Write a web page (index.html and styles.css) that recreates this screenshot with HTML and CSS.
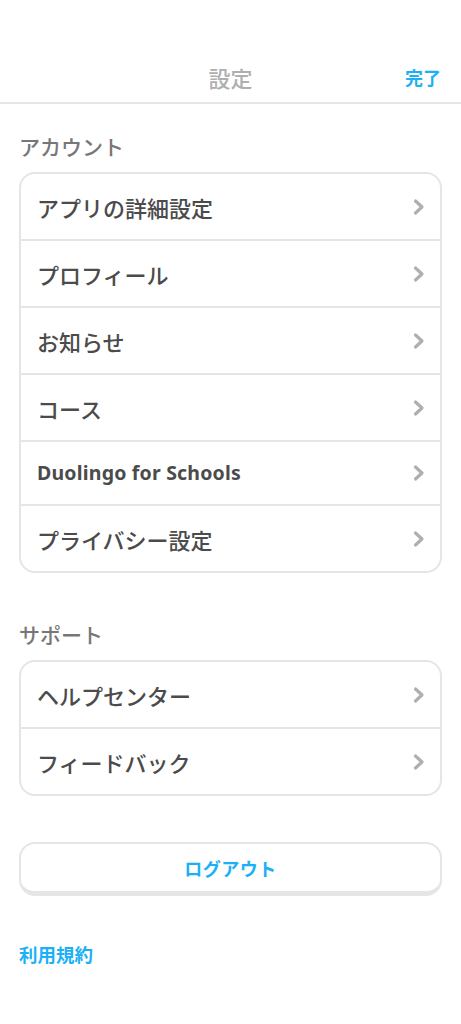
FILE: index.html
```html
<!DOCTYPE html>
<html lang="ja">
<head>
<meta charset="utf-8">
<title>設定</title>
<link rel="stylesheet" href="styles.css">
</head>
<body>
<header class="header">
  <div class="header-title">設定</div>
  <div class="header-done">完了</div>
</header>
<main class="content">
  <div class="section-label">アカウント</div>
  <div class="card">
    <div class="row"><span class="row-text">アプリの詳細設定</span><svg class="chev" viewBox="0 0 14 18"><path d="M3.5 3 L10 9 L3.5 15"/></svg></div>
    <div class="row"><span class="row-text">プロフィール</span><svg class="chev" viewBox="0 0 14 18"><path d="M3.5 3 L10 9 L3.5 15"/></svg></div>
    <div class="row"><span class="row-text">お知らせ</span><svg class="chev" viewBox="0 0 14 18"><path d="M3.5 3 L10 9 L3.5 15"/></svg></div>
    <div class="row"><span class="row-text">コース</span><svg class="chev" viewBox="0 0 14 18"><path d="M3.5 3 L10 9 L3.5 15"/></svg></div>
    <div class="row row-latin"><span class="row-text latin">Duolingo for Schools</span><svg class="chev" viewBox="0 0 14 18"><path d="M3.5 3 L10 9 L3.5 15"/></svg></div>
    <div class="row"><span class="row-text">プライバシー設定</span><svg class="chev" viewBox="0 0 14 18"><path d="M3.5 3 L10 9 L3.5 15"/></svg></div>
  </div>
  <div class="section-label section-gap">サポート</div>
  <div class="card">
    <div class="row"><span class="row-text">ヘルプセンター</span><svg class="chev" viewBox="0 0 14 18"><path d="M3.5 3 L10 9 L3.5 15"/></svg></div>
    <div class="row"><span class="row-text">フィードバック</span><svg class="chev" viewBox="0 0 14 18"><path d="M3.5 3 L10 9 L3.5 15"/></svg></div>
  </div>
  <button class="logout">ログアウト</button>
  <div class="terms">利用規約</div>
</main>
</body>
</html>
```
FILE: styles.css
```css
* { box-sizing: border-box; }
html, body { margin: 0; padding: 0; background: #fff; }
body {
  font-family: "Noto Sans CJK JP", "Noto Sans", sans-serif;
  color: #4b4b4b;
  width: 461px;
}
.header {
  position: relative;
  height: 104px;
  border-bottom: 2px solid #e5e5e5;
  display: flex;
  align-items: center;
  justify-content: center;
  padding-top: 52px;
}
.header-title {
  font-size: 22px;
  font-weight: 500;
  color: #afafaf;
  line-height: 48px;
}
.header-done {
  position: absolute;
  right: 20px;
  top: 53px;
  line-height: 48px;
  font-size: 18px;
  font-weight: 700;
  color: #1cb0f6;
}
.content {
  padding: 27px 19px 0;
}
.section-label {
  font-size: 21px;
  font-weight: 500;
  color: #777;
  line-height: 30px;
  margin-bottom: 11px;
}
.section-gap { margin-top: 46px; margin-bottom: 11px; }
.card {
  border: 2px solid #e5e5e5;
  border-radius: 16px;
  overflow: hidden;
}
.row {
  height: 67px;
  display: flex;
  align-items: center;
  justify-content: space-between;
  padding: 0 14px 0 16px;
  border-top: 2px solid #e5e5e5;
}
.row:first-child { border-top: none; height: 65px; }
.row-latin { height: 64px; }
.row-text {
  font-size: 22px;
  font-weight: 500;
  color: #4b4b4b;
  line-height: 30px;
}
.latin {
  font-family: "Noto Sans", sans-serif;
  font-weight: 700;
  font-size: 19.5px;
  letter-spacing: 0.2px;
}
.chev {
  width: 14px;
  height: 18px;
  flex: none;
}
.chev path {
  fill: none;
  stroke: #afafaf;
  stroke-width: 3.2;
  stroke-linecap: round;
  stroke-linejoin: round;
}
.logout {
  display: block;
  width: 100%;
  margin-top: 46px;
  height: 54px;
  background: #fff;
  border: 2px solid #e5e5e5;
  border-bottom-width: 5px;
  border-radius: 16px;
  font-family: "Noto Sans CJK JP", sans-serif;
  font-size: 18px;
  font-weight: 700;
  color: #1cb0f6;
  letter-spacing: 0.5px;
  padding: 0;
}
.terms {
  margin-top: 45px;
  font-size: 18.5px;
  font-weight: 700;
  color: #1cb0f6;
  line-height: 26px;
}
```
